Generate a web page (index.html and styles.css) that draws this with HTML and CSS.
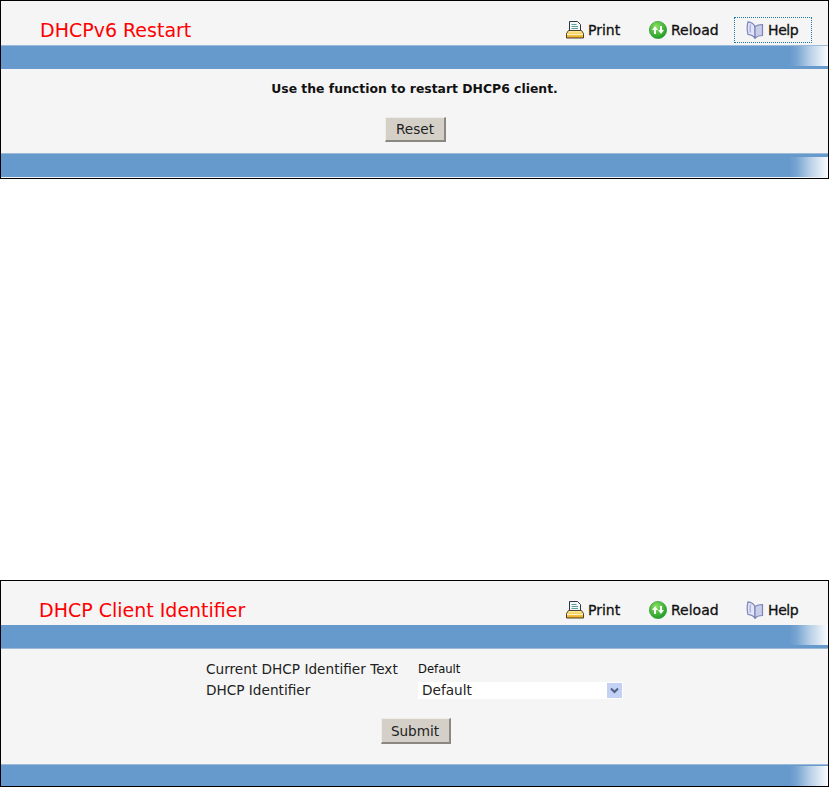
FILE: index.html
```html
<!DOCTYPE html>
<html lang="en">
<head>
<meta charset="utf-8">
<title>DHCP</title>
<link rel="stylesheet" href="styles.css">
</head>
<body>
<svg class="defs" width="0" height="0" aria-hidden="true">
  <defs>
    <linearGradient id="pg" x1="0" y1="0" x2="0" y2="1"><stop offset="0" stop-color="#fff0a0"/><stop offset="1" stop-color="#eda512"/></linearGradient>
    <radialGradient id="gg" cx="0.4" cy="0.3" r="0.8"><stop offset="0" stop-color="#8ae060"/><stop offset="1" stop-color="#12931f"/></radialGradient>
    <symbol id="i-print" viewBox="0 0 18 18">
      <path d="M3.500 .5h8l3 3v7h-11z" fill="#f4f7f7" stroke="#2f3640"/>
      <path d="M5.500 3.500h5M5.500 5.500h6.500M5.500 7.500h6.500" stroke="#5f9c9c"/>
      <path d="M2.500 9.500h13l2 3v4.500h-17v-4.500z" fill="url(#pg)" stroke="#4a4030"/>
      <path d="M1 13.500h16" stroke="#fff6c0"/>
    </symbol>
    <symbol id="i-reload" viewBox="0 0 18 18">
      <circle cx="9" cy="9" r="8.600" fill="url(#gg)" stroke="#2a9a32" stroke-width=".7"/>
      <path d="M6 13V8.500" fill="none" stroke="#fff" stroke-width="2"/>
      <path d="M3 9l3-4 3 4z" fill="#fff"/>
      <path d="M12 5v4.500" fill="none" stroke="#fff" stroke-width="2"/>
      <path d="M15 9l-3 4-3-4z" fill="#fff"/>
    </symbol>
    <symbol id="i-help" viewBox="0 0 18 18">
      <path d="M9 5.500C7.500 2.500 5 1 2 .8c-1 4-1 9 0 12.700 3 .2 5.500 1.500 7 3.500z" fill="#e3e6f8" stroke="#7d84b8" stroke-width="1.200"/>
      <path d="M9 5.500c2-1.500 4.500-2 7.500-2v11c-3 0-5.500.5-7.500 2.500z" fill="#c8cde8" stroke="#7d84b8" stroke-width="1.200"/>
      <path d="M4.500 3.500c-.5 3-.5 6 0 8" fill="none" stroke="#aab0e0" stroke-width="1.500"/>
    </symbol>
  </defs>
</svg>

<section class="panel panel-restart">
  <header class="head">
    <h1 class="title">DHCPv6 Restart</h1>
    <nav class="tools">
      <a class="tool tool-print"><svg class="icon"><use href="#i-print"/></svg>Print</a>
      <a class="tool tool-reload"><svg class="icon"><use href="#i-reload"/></svg>Reload</a>
      <a class="tool tool-help focus"><svg class="icon"><use href="#i-help"/></svg>Help</a>
    </nav>
  </header>
  <div class="band band-first"></div>
  <div class="body body-restart">
    <p class="note">Use the function to restart DHCP6 client.</p>
    <button class="btn btn-reset" type="button">Reset</button>
  </div>
  <div class="band band-last"></div>
</section>

<section class="panel panel-client">
  <header class="head head-client">
    <h1 class="title">DHCP Client Identifier</h1>
    <nav class="tools">
      <a class="tool tool-print"><svg class="icon"><use href="#i-print"/></svg>Print</a>
      <a class="tool tool-reload"><svg class="icon"><use href="#i-reload"/></svg>Reload</a>
      <a class="tool tool-help"><svg class="icon"><use href="#i-help"/></svg>Help</a>
    </nav>
  </header>
  <div class="band band-alt"></div>
  <div class="body body-client">
    <div class="form">
      <span class="label">Current DHCP Identifier Text</span>
      <span class="value">Default</span>
      <span class="label">DHCP Identifier</span>
      <div class="select">
        <span>Default</span>
        <span class="arrow"><svg width="9" height="7" viewBox="0 0 9 7"><path d="M1 1.500l3.500 3.500L8 1.500" fill="none" stroke="#4d6185" stroke-width="2"/></svg></span>
      </div>
    </div>
    <button class="btn btn-submit" type="button">Submit</button>
  </div>
  <div class="band band-end"></div>
</section>
</body>
</html>
```
FILE: styles.css
```css
html, body { margin: 0; padding: 0; background: #fff; }
body {
  width: 829px;
  font-family: "DejaVu Sans", Verdana, sans-serif;
  color: #111;
}
.defs { position: absolute; }
.panel {
  box-sizing: border-box;
  width: 829px;
  background: #f5f5f5;
  border: 1px solid #000;
}
.panel-restart { height: 179px; }
.panel-client { height: 207px; margin-top: 401px; }
.head {
  height: 44px;
  display: flex;
  justify-content: space-between;
  align-items: flex-end;
  padding-left: 39px;
}
.title {
  margin: 0 0 5px;
  font-size: 19px;
  line-height: 20px;
  font-weight: normal;
  color: #ff0000;
}
.head-client .title { margin-left: -1px; }
.tools { display: flex; align-items: center; margin-right: 16px; margin-bottom: 2px; }
.tool {
  display: flex;
  align-items: center;
  gap: 4px;
  box-sizing: border-box;
  height: 26px;
  font-size: 14px;
  -webkit-text-stroke: 0.3px #111;
  white-space: nowrap;
}
.tool-print { width: 83px; }
.tool-reload { width: 85px; }
.tool-help {
  width: 78px;
  padding-left: 11px;
  letter-spacing: -0.4px;
  border: 1px dotted transparent;
}
.tool-help.focus { border-color: #1f78a8; }
.icon { width: 18px; height: 18px; flex: none; }
.band {
  box-sizing: border-box;
  height: 24px;
  background-color: #6699cc;
  background-image: linear-gradient(90deg, rgba(255,255,255,0) 0, rgba(255,255,255,.12) 20%, rgba(255,255,255,.55) 55%, rgba(255,255,255,.97) 100%);
  background-repeat: no-repeat;
  background-size: 39px 20px;
}
.band-first { border-top: 1px solid #9dbbd8; background-position: right top; }
.band-last { border-top: 1px solid #9dbbd8; background-position: right bottom; }
.band-alt { border-bottom: 1px solid #9dbbd8; background-position: right top; }
.band-end { border-top: 1px solid #9dbbd8; height: 22px; background-position: right bottom; }
.body { text-align: center; box-sizing: border-box; }
.body-restart { height: 84px; }
.note {
  margin: 0;
  padding-top: 12px;
  font-size: 12.4px;
  line-height: 16px;
  font-weight: bold;
  color: #111;
}
.btn {
  display: block;
  box-sizing: border-box;
  margin: 0 auto;
  padding: 0;
  font-family: inherit;
  font-size: 13.6px;
  color: #222;
  background: #d4d0c8;
  border-style: solid;
  border-width: 1px 2px 2px 1px;
  border-color: #efede7 #8a8880 #8a8880 #efede7;
}
.btn-reset { width: 61px; height: 25px; margin-top: 20px; transform: translateX(1px); }
.btn-submit { width: 70px; height: 26px; margin-top: 18px; transform: translateX(1px); }
.body-client { height: 115px; padding-top: 10px; }
.form {
  display: grid;
  grid-template-columns: 212px 205px;
  grid-auto-rows: 20px;
  row-gap: 1px;
  margin-left: 205px;
  text-align: left;
  align-items: center;
}
.label { font-size: 13.65px; color: #222; }
.value { font-size: 11.6px; color: #111; }
.select {
  box-sizing: border-box;
  height: 17px;
  display: flex;
  justify-content: space-between;
  align-items: center;
  padding: 0 1px 0 4px;
  background: #fff;
  font-size: 13.65px;
  color: #222;
}
.arrow {
  width: 15px;
  height: 15px;
  display: flex;
  align-items: center;
  justify-content: center;
  background: #c3d2f4;
}
```
